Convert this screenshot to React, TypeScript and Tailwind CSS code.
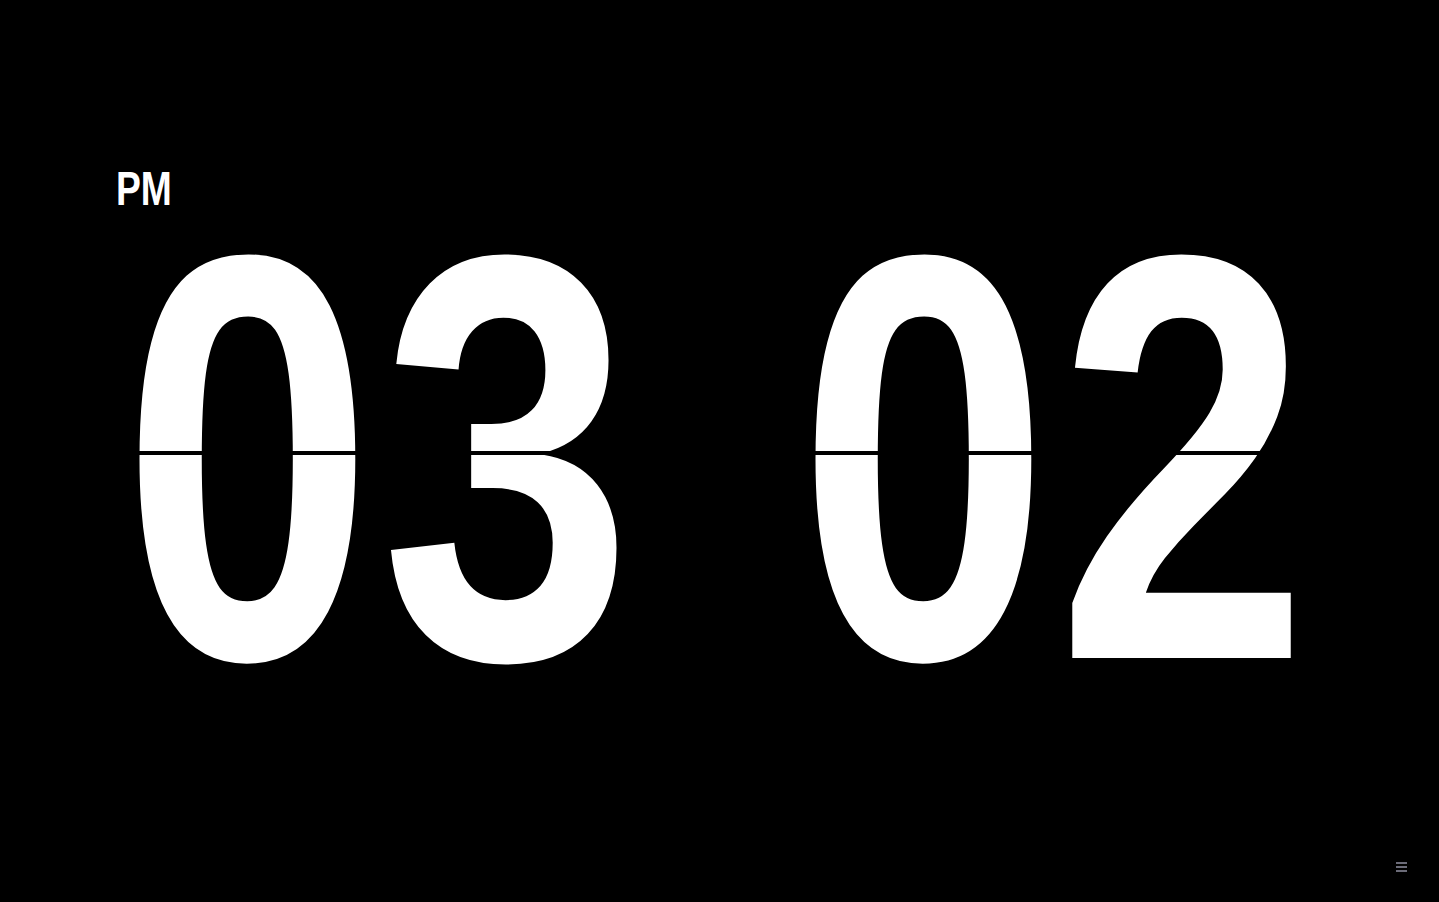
import React from "react";

const font = '"Liberation Sans", Arial, sans-serif';

function Digit({ d }: { d: string }) {
  return (
    <div className="relative w-[259px] h-[410px] flex items-center justify-center overflow-visible">
      <span
        className="block text-white font-bold leading-none text-[578px] scale-x-[0.785]"
        style={{ fontFamily: font }}
      >
        {d}
      </span>
    </div>
  );
}

export default function App() {
  return (
    <div className="relative w-full h-[902px] bg-black overflow-hidden" style={{ fontFamily: font }}>
      <div className="pt-[164px] pl-[116px] h-[253px]">
        <span className="inline-block text-white font-bold text-[49px] leading-none origin-left scale-x-[0.76]">PM</span>
      </div>
      <div className="relative ml-[118px] flex">
        <Digit d="0" />
        <Digit d="3" />
        <div className="w-[158px]" />
        <Digit d="0" />
        <Digit d="2" />
        <div className="absolute left-0 right-0 top-[198px] h-[4px] bg-black" />
      </div>
      <div className="absolute left-[1396px] top-[862px] w-[11px] flex flex-col gap-[2px]">
        <div className="h-[2px] bg-[#6b6b78]" />
        <div className="h-[2px] bg-[#6b6b78]" />
        <div className="h-[2px] bg-[#6b6b78]" />
      </div>
    </div>
  );
}
